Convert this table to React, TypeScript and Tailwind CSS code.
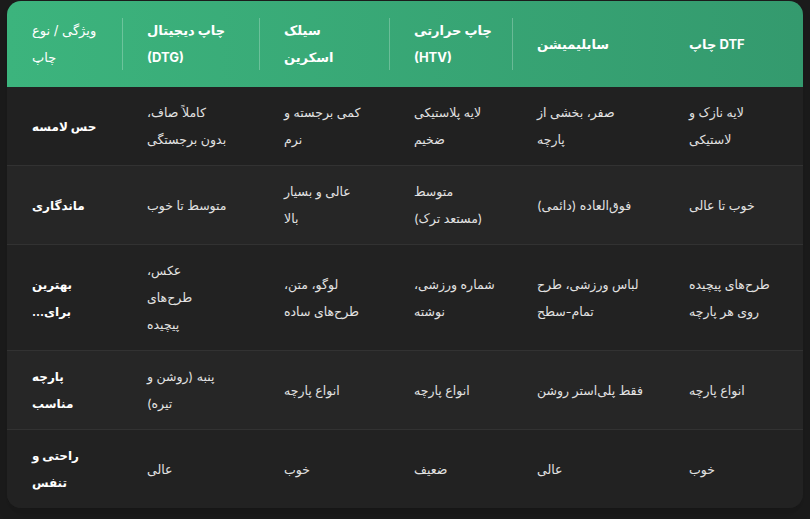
const cols = "grid grid-cols-[115px_137px_130px_123px_152px_139px]";

const headers: string[][] = [
  ["ویژگی / نوع", "چاپ"],
  ["چاپ دیجیتال", "(DTG)"],
  ["سیلک", "اسکرین"],
  ["چاپ حرارتی", "(HTV)"],
  ["سابلیمیشن"],
  ["چاپ DTF"],
];

type Row = { label: string[]; cells: string[][]; bg: string };

const rows: Row[] = [
  {
    label: ["حس لامسه"],
    cells: [
      ["کاملاً صاف،", "بدون برجستگی"],
      ["کمی برجسته و", "نرم"],
      ["لایه پلاستیکی", "ضخیم"],
      ["صفر، بخشی از", "پارچه"],
      ["لایه نازک و", "لاستیکی"],
    ],
    bg: "bg-[#212121]",
  },
  {
    label: ["ماندگاری"],
    cells: [
      ["متوسط تا خوب"],
      ["عالی و بسیار", "بالا"],
      ["متوسط", "(مستعد ترک)"],
      ["فوق‌العاده (دائمی)"],
      ["خوب تا عالی"],
    ],
    bg: "bg-[#262626]",
  },
  {
    label: ["بهترین", "برای..."],
    cells: [
      ["عکس،", "طرح‌های", "پیچیده"],
      ["لوگو، متن،", "طرح‌های ساده"],
      ["شماره ورزشی،", "نوشته"],
      ["لباس ورزشی، طرح", "تمام-سطح"],
      ["طرح‌های پیچیده", "روی هر پارچه"],
    ],
    bg: "bg-[#222222]",
  },
  {
    label: ["پارچه", "مناسب"],
    cells: [
      ["پنبه (روشن و", "تیره)"],
      ["انواع پارچه"],
      ["انواع پارچه"],
      ["فقط پلی‌استر روشن"],
      ["انواع پارچه"],
    ],
    bg: "bg-[#262626]",
  },
  {
    label: ["راحتی و", "تنفس"],
    cells: [["عالی"], ["خوب"], ["ضعیف"], ["عالی"], ["خوب"]],
    bg: "bg-[#222222]",
  },
];

export default function App() {
  return (
    <div
      className="min-h-[519px] w-[810px] bg-[#1b1b1b] px-[7px] pt-px"
      style={{ fontFamily: 'Inter, "DejaVu Sans", sans-serif' }}
    >
      <div className="w-[796px] overflow-hidden rounded-[14px] bg-[#222222] shadow-lg">
        <div className={`${cols} bg-gradient-to-r from-[#3cb47d] to-[#349a6e]`}>
          {headers.map((h, i) => (
            <div
              key={i}
              className={`relative flex items-center py-4 pl-[25px] text-[13px] leading-[27px] text-white ${
                i === 0 ? "font-normal" : "font-bold"
              } ${
                i > 0 && i < 5
                  ? "before:absolute before:left-0 before:top-[17px] before:bottom-[17px] before:w-px before:bg-white/25"
                  : ""
              }`}
            >
              <div className="flex flex-col items-start">
                {h.map((l, j) => (
                  <span key={j} dir="ltr" className="whitespace-nowrap">
                    {l}
                  </span>
                ))}
              </div>
            </div>
          ))}
        </div>
        {rows.map((r, ri) => (
          <div
            key={ri}
            className={`${cols} ${r.bg} ${ri > 0 ? "border-t border-[#323232]" : ""}`}
          >
            <div className="flex items-center py-3 pl-[25px] text-[12px] font-bold leading-[27px] text-white">
              <div className="flex flex-col items-start">
                {r.label.map((l, j) => (
                  <span key={j} dir="rtl" className="whitespace-nowrap">
                    {l}
                  </span>
                ))}
              </div>
            </div>
            {r.cells.map((c, ci) => (
              <div
                key={ci}
                className="flex items-center py-3 pl-[25px] text-[12.5px] leading-[27px] text-[#e2e2e2]"
              >
                <div className="flex flex-col items-start">
                  {c.map((l, j) => (
                    <span key={j} dir="rtl" className="whitespace-nowrap">
                      {l}
                    </span>
                  ))}
                </div>
              </div>
            ))}
          </div>
        ))}
      </div>
    </div>
  );
}
